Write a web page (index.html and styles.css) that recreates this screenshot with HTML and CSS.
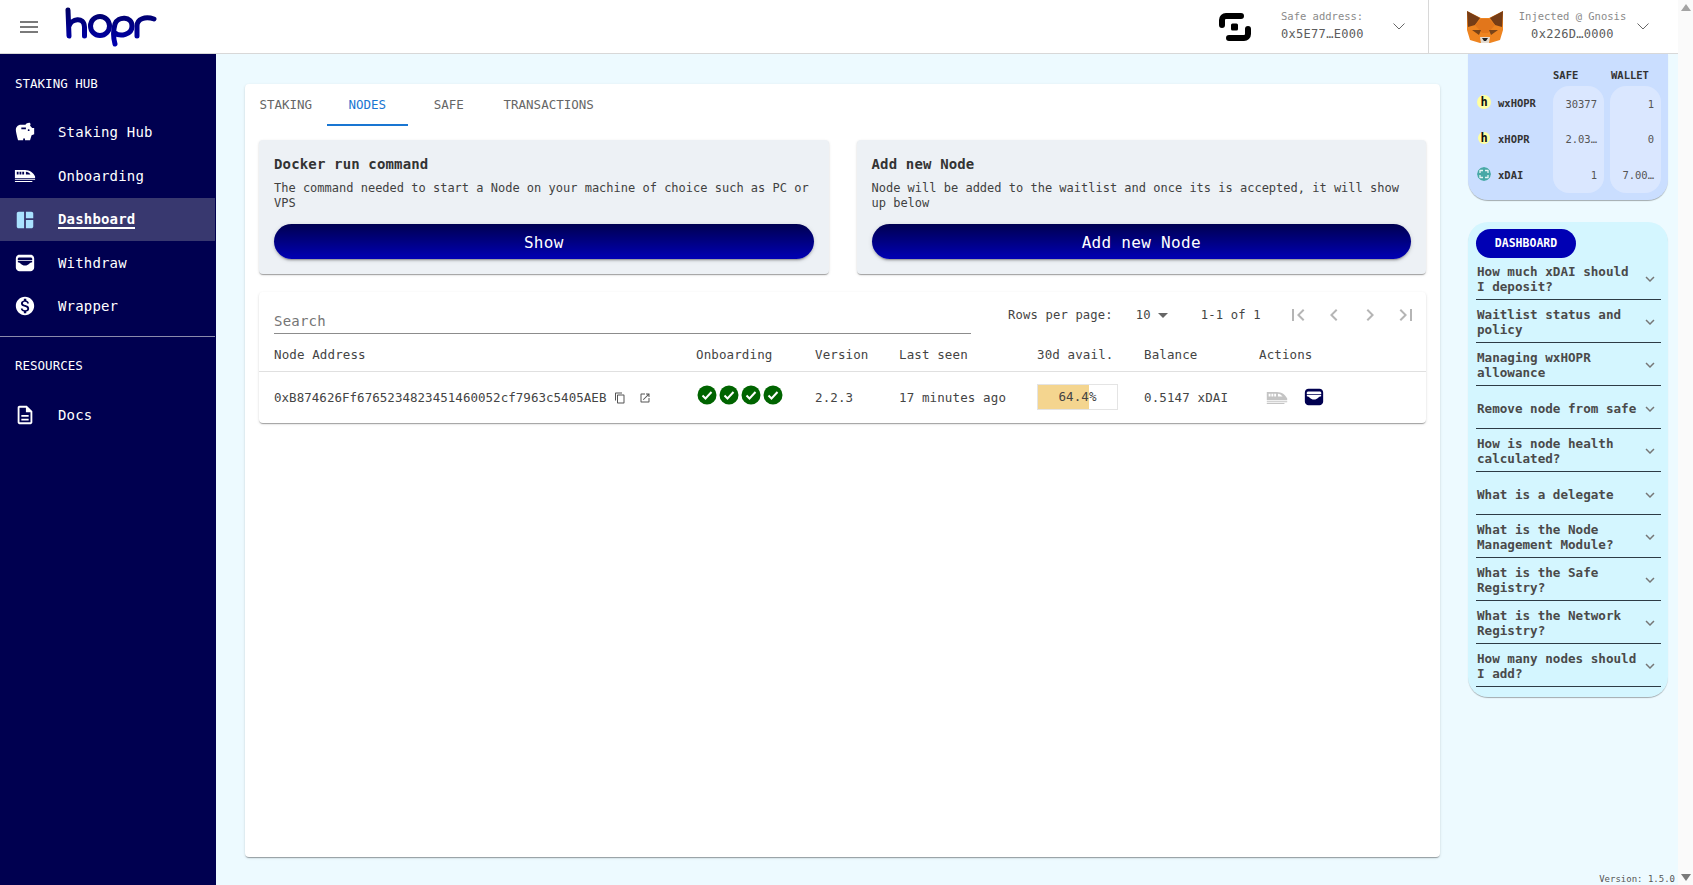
FILE: index.html
```html
<!DOCTYPE html>
<html>

<head>
    <title>Staking Hub | HOPR</title>
    <meta charset="UTF-8">
    <link rel="stylesheet" href="styles.css">
</head>

<body>
    <svg class="sprite" xmlns="http://www.w3.org/2000/svg">
        <symbol id="i-menu" viewBox="0 0 24 24"><path d="M3 18h18v-2H3v2zm0-5h18v-2H3v2zm0-7v2h18V6H3z" /></symbol>
        <symbol id="i-savings" viewBox="0 0 24 24"><path d="M19.83 7.5l-2.27-2.27c.07-.42.18-.81.32-1.15.08-.18.12-.37.12-.58C18 2.67 17.33 2 16.5 2c-1.64 0-3.09.79-4 2h-5C4.46 4 2 6.46 2 9.5S4.5 21 4.5 21H10v-2h2v2h5.5l1.68-5.59L22 14.47V7.5h-2.17zM13 9H8V7h5v2zm3 2c-.55 0-1-.45-1-1s.45-1 1-1 1 .45 1 1-.45 1-1 1z" /></symbol>
        <symbol id="i-train" viewBox="0 0 24 14"><path fill-rule="evenodd" d="M1 1h11c5 0 9 3 11 7v2H1V1zm2 2v3h2V3H3zm3 0v3h2V3H6zm3 0v3h2V3H9zm4 0v3h5c-1.400-1.800-3-3-5-3zM1 11h22v1H1zM1 13h19v1H1z" /></symbol>
        <symbol id="i-dashboard" viewBox="0 0 24 24"><path d="M11 21H5c-1.100 0-2-.9-2-2V5c0-1.100.9-2 2-2h6v18zm2 0h6c1.100 0 2-.9 2-2v-7h-8v9zm8-11V5c0-1.100-.9-2-2-2h-6v7h8z" /></symbol>
        <symbol id="i-wallet" viewBox="0 0 24 24"><path fill-rule="evenodd" d="M6 3h12c2.200 0 4 1.800 4 4v10c0 2.200-1.800 4-4 4H6c-2.200 0-4-1.800-4-4V7c0-2.200 1.800-4 4-4zm0 3c-.9 0-1.600.5-1.900 1.200v1.600h15.800V7.200C19.600 6.500 18.900 6 18 6H6zm-1.800 5.200c3 .1 3.500 3.600 7.800 3.600s4.800-3.500 7.800-3.600V9.500H4.200v1.700z" /></symbol>
        <symbol id="i-dollar" viewBox="0 0 24 24"><path d="M12 2C6.480 2 2 6.480 2 12s4.480 10 10 10 10-4.480 10-10S17.520 2 12 2zm1.410 16.090V20h-2.670v-1.930c-1.710-.36-3.160-1.460-3.270-3.400h1.960c.1 1.050.82 1.870 2.650 1.870 1.960 0 2.400-.98 2.400-1.590 0-.83-.44-1.610-2.670-2.140-2.480-.6-4.180-1.620-4.180-3.670 0-1.720 1.390-2.840 3.110-3.210V4h2.670v1.950c1.860.45 2.790 1.860 2.850 3.390H14.300c-.05-1.110-.64-1.870-2.220-1.870-1.500 0-2.400.68-2.400 1.640 0 .84.65 1.390 2.670 1.910s4.180 1.390 4.180 3.910c-.01 1.830-1.380 2.830-3.120 3.160z" /></symbol>
        <symbol id="i-doc" viewBox="0 0 24 24"><path d="M8 16h8v2H8zm0-4h8v2H8zm6-10H6c-1.100 0-2 .9-2 2v16c0 1.100.89 2 1.990 2H18c1.100 0 2-.9 2-2V8l-6-6zm4 18H6V4h7v5h5v11z" /></symbol>
        <symbol id="i-copy" viewBox="0 0 24 24"><path d="M16 1H4c-1.100 0-2 .9-2 2v14h2V3h12V1zm3 4H8c-1.100 0-2 .9-2 2v14c0 1.100.9 2 2 2h11c1.100 0 2-.9 2-2V7c0-1.100-.9-2-2-2zm0 16H8V7h11v14z" /></symbol>
        <symbol id="i-launch" viewBox="0 0 24 24"><path d="M19 19H5V5h7V3H5c-1.110 0-2 .9-2 2v14c0 1.100.89 2 2 2h14c1.100 0 2-.9 2-2v-7h-2v7zM14 3v2h3.590l-9.830 9.830 1.410 1.410L19 6.410V10h2V3h-7z" /></symbol>
        <symbol id="i-first" viewBox="0 0 24 24"><path d="M18.410 16.590L13.820 12l4.590-4.590L17 6l-6 6 6 6zM6 6h2v12H6z" /></symbol>
        <symbol id="i-prev" viewBox="0 0 24 24"><path d="M15.410 16.590L10.830 12l4.580-4.590L14 6l-6 6 6 6 1.410-1.410z" /></symbol>
        <symbol id="i-next" viewBox="0 0 24 24"><path d="M8.590 16.590L13.170 12 8.590 7.410 10 6l6 6-6 6-1.410-1.410z" /></symbol>
        <symbol id="i-last" viewBox="0 0 24 24"><path d="M5.590 7.410L10.180 12l-4.590 4.590L7 18l6-6-6-6zM16 6h2v12h-2z" /></symbol>
        <symbol id="i-more" viewBox="0 0 24 24"><path d="M16.590 8.590L12 13.170 7.410 8.590 6 10l6 6 6-6z" /></symbol>
        <symbol id="i-check" viewBox="0 0 20 20"><circle cx="10" cy="10" r="9.500" fill="#006400" /><path d="M5.500 10.500l3 3 6-6.500" fill="none" stroke="#fff" stroke-width="2" /></symbol>
        <symbol id="i-xdai" viewBox="0 0 14 14"><circle cx="7" cy="7" r="7" fill="#48a9a6" /><path d="M3 6V3.500h3M11 6V3.500H8M3 8v2.500h3M11 8v2.500H8" fill="none" stroke="#e4f4f3" stroke-width="1.300" /></symbol>
    </svg>

    <header class="topbar">
        <svg class="menu-icon"><use href="#i-menu" /></svg>
        <svg class="logo" viewBox="0 0 92 40">
            <defs>
                <linearGradient id="logo-fill" gradientUnits="userSpaceOnUse" x1="0" y1="0" x2="0" y2="40">
                    <stop offset="0" stop-color="#000060" />
                    <stop offset="1" stop-color="#0000b4" />
                </linearGradient>
            </defs>
            <g fill="none" stroke="url(#logo-fill)" stroke-width="5" stroke-linecap="round">
                <path d="M3 3 L4 29 M4 19 C6 12 19 9 19.500 20 L19.500 29" />
                <circle cx="35" cy="19" r="9.500" />
                <path d="M50 37 C48 30 48 24 50 17 C53 9 67 9 67 19 C67 28 55 30 50 26" />
                <path d="M72 29 V19 C72 12 80 9 89 12" />
            </g>
        </svg>
        <div class="topbar-right">
            <div class="account">
                <svg class="safe-logo" viewBox="0 0 34 32">
                    <g fill="none" stroke="#000" stroke-width="6" stroke-linejoin="round" stroke-linecap="round">
                        <path d="M4 14 V9 a4 4 0 0 1 4 -4 H23" />
                        <path d="M11 27 H26 a4 4 0 0 0 4 -4 V18" />
                    </g>
                    <rect x="13" y="12.500" width="7" height="7" rx="1.500" />
                </svg>
                <div class="account-text safe-text">
                    <span class="account-label">Safe address:</span>
                    <span class="account-value">0x5E77…E000</span>
                </div>
                <svg class="thin-chevron" viewBox="0 0 12 7"><path d="M.5 .5L6 6l5.500-5.500" /></svg>
            </div>
            <div class="account wallet-account">
                <svg class="fox" viewBox="0 0 38 34">
                    <polygon points="1,1 15,8 23,8 37,1 37,20 34,30 24,33 14,33 4,30 1,20" fill="#ee8420" />
                    <polygon points="1,1 14,8 9,15 2,17" fill="#763d16" />
                    <polygon points="37,1 24,8 29,15 36,17" fill="#763d16" />
                    <polygon points="9,15 15,9 23,9 29,15 22,23 16,23" fill="#e2761b" />
                    <polygon points="6,20 15,20 13,25" fill="#7a4418" />
                    <polygon points="32,20 23,20 25,25" fill="#7a4418" />
                    <polygon points="14,27 24,27 23,33 15,33" fill="#e4dcd2" />
                    <polygon points="16,28 22,28 20,31 18,31" fill="#222" />
                </svg>
                <div class="account-text">
                    <span class="account-label">Injected @ Gnosis</span>
                    <span class="account-value">0x226D…0000</span>
                </div>
                <svg class="thin-chevron" viewBox="0 0 12 7"><path d="M.5 .5L6 6l5.500-5.500" /></svg>
            </div>
        </div>
    </header>

    <div class="scrollbar">
        <span class="scroll-up"></span>
        <span class="scroll-down"></span>
    </div>

    <div class="layout">
        <nav class="sidebar">
            <h3 class="nav-heading">STAKING HUB</h3>
            <ul class="nav-list">
                <li class="nav-item"><svg class="nav-icon"><use href="#i-savings" /></svg><span>Staking Hub</span></li>
                <li class="nav-item"><svg class="nav-icon train"><use href="#i-train" /></svg><span>Onboarding</span></li>
                <li class="nav-item active"><svg class="nav-icon"><use href="#i-dashboard" /></svg><span>Dashboard</span></li>
                <li class="nav-item"><svg class="nav-icon"><use href="#i-wallet" /></svg><span>Withdraw</span></li>
                <li class="nav-item"><svg class="nav-icon"><use href="#i-dollar" /></svg><span>Wrapper</span></li>
            </ul>
            <hr class="nav-divider">
            <h3 class="nav-heading">RESOURCES</h3>
            <ul class="nav-list docs">
                <li class="nav-item"><svg class="nav-icon"><use href="#i-doc" /></svg><span>Docs</span></li>
            </ul>
        </nav>

        <main class="content">
            <section class="main-card">
                <div class="tabs">
                    <div class="tab">STAKING</div>
                    <div class="tab active">NODES</div>
                    <div class="tab">SAFE</div>
                    <div class="tab">TRANSACTIONS</div>
                </div>

                <div class="action-cards">
                    <div class="action-card">
                        <h2>Docker run command</h2>
                        <p>The command needed to start a Node on your machine of choice such as PC or VPS</p>
                        <button type="button" class="grad-button">Show</button>
                    </div>
                    <div class="action-card">
                        <h2>Add new Node</h2>
                        <p>Node will be added to the waitlist and once its is accepted, it will show up below</p>
                        <button type="button" class="grad-button">Add new Node</button>
                    </div>
                </div>

                <div class="table-card">
                    <div class="table-tools">
                        <div class="search">Search</div>
                        <div class="pagination">
                            <span class="rows-label">Rows per page:</span>
                            <span class="rows-value">10</span>
                            <span class="rows-arrow"></span>
                            <span class="rows-range">1-1 of 1</span>
                            <svg class="page-icon first"><use href="#i-first" /></svg>
                            <svg class="page-icon"><use href="#i-prev" /></svg>
                            <svg class="page-icon"><use href="#i-next" /></svg>
                            <svg class="page-icon"><use href="#i-last" /></svg>
                        </div>
                    </div>
                    <table class="nodes">
                        <thead>
                            <tr>
                                <th class="col-address">Node Address</th>
                                <th class="col-onboard">Onboarding</th>
                                <th class="col-version">Version</th>
                                <th class="col-seen">Last seen</th>
                                <th class="col-avail">30d avail.</th>
                                <th class="col-balance">Balance</th>
                                <th>Actions</th>
                            </tr>
                        </thead>
                        <tbody>
                            <tr>
                                <td>
                                    <div class="address">
                                        <span>0xB874626Ff6765234823451460052cf7963c5405AEB</span>
                                        <svg class="mini-icon copy"><use href="#i-copy" /></svg>
                                        <svg class="mini-icon launch"><use href="#i-launch" /></svg>
                                    </div>
                                </td>
                                <td>
                                    <div class="checks">
                                        <svg><use href="#i-check" /></svg>
                                        <svg><use href="#i-check" /></svg>
                                        <svg><use href="#i-check" /></svg>
                                        <svg><use href="#i-check" /></svg>
                                    </div>
                                </td>
                                <td>2.2.3</td>
                                <td>17 minutes ago</td>
                                <td>
                                    <div class="avail">
                                        <div class="avail-fill" style="width: 64.4%"></div>
                                        <span>64.4%</span>
                                    </div>
                                </td>
                                <td>0.5147 xDAI</td>
                                <td>
                                    <div class="actions">
                                        <svg class="action-train"><use href="#i-train" /></svg>
                                        <svg class="action-wallet"><use href="#i-wallet" /></svg>
                                    </div>
                                </td>
                            </tr>
                        </tbody>
                    </table>
                </div>
            </section>
        </main>

        <aside class="side-col">
            <div class="balances">
                <div class="token-col">
                    <div class="token">
                        <span class="coin yellow">h</span>wxHOPR
                    </div>
                    <div class="token">
                        <span class="coin yellow small">h</span>xHOPR
                    </div>
                    <div class="token">
                        <svg class="coin"><use href="#i-xdai" /></svg>xDAI
                    </div>
                </div>
                <div class="amount-col">
                    <div class="amount-head">SAFE</div>
                    <div class="amount-pill">
                        <span>30377</span>
                        <span>2.03…</span>
                        <span>1</span>
                    </div>
                </div>
                <div class="amount-col">
                    <div class="amount-head">WALLET</div>
                    <div class="amount-pill">
                        <span>1</span>
                        <span>0</span>
                        <span>7.00…</span>
                    </div>
                </div>
            </div>

            <div class="faq">
                <div class="faq-chip">DASHBOARD</div>
                <div class="faq-row"><span>How much xDAI should I deposit?</span><svg><use href="#i-more" /></svg></div>
                <div class="faq-row"><span>Waitlist status and policy</span><svg><use href="#i-more" /></svg></div>
                <div class="faq-row"><span>Managing wxHOPR allowance</span><svg><use href="#i-more" /></svg></div>
                <div class="faq-row single"><span>Remove node from safe</span><svg><use href="#i-more" /></svg></div>
                <div class="faq-row"><span>How is node health calculated?</span><svg><use href="#i-more" /></svg></div>
                <div class="faq-row single"><span>What is a delegate</span><svg><use href="#i-more" /></svg></div>
                <div class="faq-row"><span>What is the Node Management Module?</span><svg><use href="#i-more" /></svg></div>
                <div class="faq-row"><span>What is the Safe Registry?</span><svg><use href="#i-more" /></svg></div>
                <div class="faq-row"><span>What is the Network Registry?</span><svg><use href="#i-more" /></svg></div>
                <div class="faq-row"><span>How many nodes should I add?</span><svg><use href="#i-more" /></svg></div>
            </div>

            <div class="version">Version: 1.5.0</div>
        </aside>
    </div>
</body>

</html>
```

FILE: styles.css
```css
html {
    font-size: 14px;
    font-family: 'DejaVu Sans Mono', 'Liberation Mono', monospace;
}

body {
    margin: 0;
    width: 1693px;
    height: 885px;
    overflow: hidden;
    position: relative;
    background-color: #edfaff;
    color: #414141;
}

h2,
h3,
p,
ul {
    margin: 0;
    padding: 0;
}

ul>li {
    list-style: none;
}

.sprite {
    display: none;
}

/* top bar */
.topbar {
    display: flex;
    align-items: center;
    height: 53px;
    width: 1678px;
    background-color: #fff;
    border-bottom: 1px solid #d8d8d8;
}

.menu-icon {
    width: 24px;
    height: 24px;
    margin-left: 17px;
    fill: #7a7a7a;
}

.logo {
    width: 92px;
    height: 40px;
    margin-left: 24px;
}

.topbar-right {
    display: flex;
    margin-left: auto;
    height: 100%;
}

.account {
    display: flex;
    align-items: center;
    width: 219px;
    border-right: 1px solid #d8d8d8;
}

.wallet-account {
    border-right: none;
    width: 249px;
    padding-left: 37px;
    box-sizing: border-box;
}

.safe-logo {
    width: 34px;
    height: 32px;
    margin-left: 9px;
}

.fox {
    width: 38px;
    height: 34px;
}

.account-text {
    display: flex;
    flex-direction: column;
    align-items: center;
    gap: 5px;
    margin-left: 13px;
    margin-top: -3px;
    width: 111px;
}

.safe-text {
    align-items: flex-start;
    margin-left: 29px;
    width: 109px;
}

.account-label {
    font-size: 10.5px;
    color: #8a8a8a;
}

.account-value {
    font-size: 12px;
    letter-spacing: .3px;
    color: #5c5c5c;
}

.thin-chevron {
    width: 12px;
    height: 7px;
    fill: none;
    stroke: #666;
    margin-left: 3px;
}

.wallet-account .thin-chevron {
    margin-left: 9px;
}

/* fake scrollbar, the page is a fixed window */
.scrollbar {
    position: absolute;
    top: 0;
    right: 0;
    bottom: 0;
    width: 15px;
    background-color: #fafafa;
    display: flex;
    flex-direction: column;
    justify-content: space-between;
    align-items: center;
    padding: 4px 0;
    box-sizing: border-box;
}

.scroll-up {
    border: 5px solid transparent;
    border-top: none;
    border-bottom: 7px solid #a3a3a3;
}

.scroll-down {
    border: 5px solid transparent;
    border-bottom: none;
    border-top: 7px solid #7a7a7a;
}

.layout {
    display: flex;
    height: 831px;
    width: 1678px;
}

/* sidebar */
.sidebar {
    width: 216px;
    flex: none;
    background-color: #000050;
    color: #fff;
    padding-top: 22px;
    box-sizing: border-box;
}

.nav-heading {
    font-size: 12.5px;
    font-weight: 500;
    line-height: 15px;
    padding-left: 15px;
}

.nav-list {
    margin-top: 21px;
}

.nav-list.docs {
    margin-top: 22px;
}

.nav-item {
    display: flex;
    align-items: center;
    box-sizing: border-box;
    height: 43px;
    width: 215px;
    font-size: 14px;
    letter-spacing: .17px;
}

.nav-item:nth-child(1) {
    padding-bottom: 4px;
}

.nav-item:nth-child(2) {
    padding-bottom: 2px;
}

.nav-item.active {
    background-color: #38386f;
    font-weight: bold;
    padding-top: 2px;
}

.nav-item.active span {
    border-bottom: 2px solid #fff;
    line-height: 15px;
}

.nav-item.active .nav-icon {
    fill: #a9e2ff;
    margin-top: -2px;
}

.nav-icon {
    width: 22px;
    height: 22px;
    margin-left: 14px;
    margin-right: 22px;
    fill: #fff;
}

.nav-icon.train {
    height: 13px;
}

.nav-divider {
    border: none;
    border-top: 1px solid #8a8aab;
    margin: 9px 1px 21px 0;
}

/* main */
.content {
    flex: 1;
    padding: 30px 28px 28px 29px;
    display: flex;
}

.main-card {
    flex: 1;
    min-width: 0;
    background-color: #fff;
    border-radius: 4px;
    box-shadow: 0 2px 1px -1px rgba(0, 0, 0, .2), 0 1px 1px rgba(0, 0, 0, .14), 0 1px 3px rgba(0, 0, 0, .12);
    padding: 0 14px 0 14px;
}

.tabs {
    display: flex;
    height: 42px;
    margin-left: -14px;
    font-size: 12.5px;
    line-height: 42px;
    color: #666;
}

.tab {
    min-width: 81.5px;
    padding: 0 14px;
    text-align: center;
    box-sizing: border-box;
}

.tab.active {
    color: #1976d2;
    border-bottom: 2px solid #1976d2;
}

.action-cards {
    display: flex;
    gap: 28px;
    margin-top: 14px;
}

.action-card {
    flex: 1;
    height: 134px;
    box-sizing: border-box;
    padding: 16px 15px 0;
    background-color: #edf1f5;
    border-radius: 4px;
    box-shadow: 0 2px 1px -1px rgba(0, 0, 0, .2), 0 1px 1px rgba(0, 0, 0, .14), 0 1px 3px rgba(0, 0, 0, .12);
}

.action-card h2 {
    font-size: 14px;
    line-height: 17px;
    letter-spacing: .15px;
    color: #333;
}

.action-card p {
    font-size: 12px;
    line-height: 15px;
    margin-top: 8px;
    height: 30px;
}

.grad-button {
    display: block;
    width: 100%;
    height: 35px;
    margin-top: 13px;
    padding-top: 3px;
    border: none;
    border-radius: 18px;
    background: linear-gradient(#000050, #0000b4);
    color: #fff;
    font-family: inherit;
    font-size: 16px;
    letter-spacing: .3px;
    box-shadow: 0 3px 1px -2px rgba(0, 0, 0, .2), 0 2px 2px rgba(0, 0, 0, .14), 0 1px 5px rgba(0, 0, 0, .12);
}

.table-card {
    margin-top: 18px;
    height: 131px;
    background-color: #fff;
    border-radius: 4px;
    box-shadow: 0 2px 1px -1px rgba(0, 0, 0, .2), 0 1px 1px rgba(0, 0, 0, .14), 0 1px 3px rgba(0, 0, 0, .12);
}

.table-tools {
    display: flex;
    height: 43px;
    padding-left: 15px;
}

.search {
    width: 697px;
    height: 42px;
    box-sizing: border-box;
    padding-top: 21px;
    font-size: 14px;
    line-height: 17px;
    letter-spacing: .2px;
    color: #757575;
    border-bottom: 1px solid #8c8c8c;
}

.pagination {
    display: flex;
    align-items: center;
    height: 46px;
    margin-left: 37px;
    font-size: 12.2px;
    letter-spacing: .15px;
    color: #444;
}

.rows-value {
    margin-left: 23px;
}

.rows-arrow {
    margin-left: 7px;
    border: 5px solid transparent;
    border-bottom: none;
    border-top: 5px solid #666;
}

.rows-range {
    margin-left: 33px;
    margin-right: 25px;
}

.page-icon {
    width: 24px;
    height: 24px;
    margin-right: 12px;
    fill: #b5b5b5;
}

.page-icon:last-child {
    margin-right: 0;
}

.nodes {
    width: 100%;
    table-layout: fixed;
    border-collapse: collapse;
    font-size: 12.5px;
    letter-spacing: .12px;
    color: #444;
}

.nodes th {
    font-weight: normal;
    text-align: left;
    height: 36px;
    padding: 4px 0 0;
    box-sizing: border-box;
    border-bottom: 1px solid #e0e0e0;
}

.nodes td {
    height: 51px;
    padding: 0;
}

.nodes th.col-address,
.nodes td:first-child {
    padding-left: 15px;
}

.col-address {
    width: 437px;
}

.col-onboard {
    width: 119px;
}

.col-version {
    width: 84px;
}

.col-seen {
    width: 138px;
}

.col-avail {
    width: 107px;
}

.col-balance {
    width: 115px;
}

.address {
    display: flex;
    align-items: center;
    white-space: nowrap;
    letter-spacing: .03px;
}

.mini-icon {
    width: 12px;
    height: 12px;
    fill: #555;
    flex: none;
}

.mini-icon.copy {
    margin-left: 8px;
    margin-top: 2px;
}

.mini-icon.launch {
    margin-left: 13px;
    margin-top: 2px;
}

.checks {
    display: flex;
    gap: 2px;
    margin-left: 1px;
    margin-top: -4px;
}

.checks svg {
    width: 20px;
    height: 20px;
}

.avail {
    position: relative;
    width: 81px;
    height: 26px;
    box-sizing: border-box;
    border: 1px solid #e4e4e4;
    line-height: 24px;
    text-align: center;
}

.avail-fill {
    position: absolute;
    left: 0;
    top: 0;
    bottom: 0;
    background-color: #f4d58f;
}

.avail span {
    position: relative;
}

.actions {
    display: flex;
    align-items: center;
    margin-left: 6px;
}

.action-train {
    width: 24px;
    height: 13px;
    fill: #c4c4c4;
}

.action-wallet {
    width: 22px;
    height: 22px;
    margin-left: 14px;
    fill: #000050;
}

/* right column */
.side-col {
    width: 210px;
    flex: none;
    display: flex;
    flex-direction: column;
    padding-right: 10px;
    box-sizing: border-box;
}

.balances {
    display: flex;
    height: 146px;
    box-sizing: border-box;
    background-color: #cadeff;
    border-radius: 0 0 20px 20px;
    box-shadow: 0 2px 1px -1px rgba(0, 0, 0, .2), 0 1px 1px rgba(0, 0, 0, .14);
    padding: 15px 7px 0 9px;
}

.token-col {
    width: 76px;
    padding-top: 16px;
}

.token {
    display: flex;
    align-items: center;
    gap: 7px;
    height: 36px;
    font-size: 10.5px;
    font-weight: bold;
    color: #333;
}

.coin {
    width: 14px;
    height: 14px;
    border-radius: 50%;
    flex: none;
    font-size: 12px;
    font-weight: bold;
    line-height: 14px;
    text-align: center;
    color: #111;
    margin-bottom: 3px;
}

.coin.yellow {
    background-color: #ffffa0;
}

.coin.small {
    width: 12px;
    height: 12px;
    line-height: 12px;
    margin-left: 1px;
    margin-right: 1px;
}

.amount-col {
    width: 51px;
    margin-right: 6px;
}

.amount-col:last-child {
    margin-right: 0;
}

.amount-head {
    font-size: 10.5px;
    font-weight: bold;
    line-height: 13px;
    color: #333;
    white-space: nowrap;
}

.amount-col:last-child .amount-head {
    padding-left: 1px;
}

.amount-pill {
    display: flex;
    flex-direction: column;
    align-items: flex-end;
    justify-content: space-around;
    box-sizing: border-box;
    margin-top: 4px;
    height: 107px;
    padding: 0 7px 0 0;
    background-color: #dae7ff;
    border-radius: 16px;
    font-size: 10.5px;
    color: #555;
}

.faq {
    margin-top: 22px;
    height: 475px;
    box-sizing: border-box;
    padding: 7px 7px 0 8px;
    background-color: #d4f6ff;
    border-radius: 20px;
    box-shadow: 0 2px 1px -1px rgba(0, 0, 0, .2), 0 1px 1px rgba(0, 0, 0, .14);
}

.faq-chip {
    width: 100px;
    height: 29px;
    line-height: 29px;
    text-align: center;
    border-radius: 15px;
    background-color: #0000b4;
    color: #fff;
    font-size: 11.5px;
    font-weight: bold;
}

.faq-row {
    display: flex;
    align-items: center;
    justify-content: space-between;
    height: 43px;
    box-sizing: border-box;
    padding: 1px 2px 0 1px;
    border-bottom: 1px solid #2d3b45;
    font-size: 12.6px;
    font-weight: bold;
    line-height: 15px;
    color: #4a4a4a;
}

.faq-row.single {
    padding-top: 3px;
}

.faq-chip+.faq-row {
    height: 42px;
}

.faq-row span {
    width: 165px;
}

.faq-row svg {
    width: 18px;
    height: 18px;
    fill: #777;
    flex: none;
}

.version {
    margin-top: auto;
    align-self: flex-end;
    margin-right: -7px;
    padding-bottom: 1px;
    font-size: 9px;
    color: #555;
}
```
